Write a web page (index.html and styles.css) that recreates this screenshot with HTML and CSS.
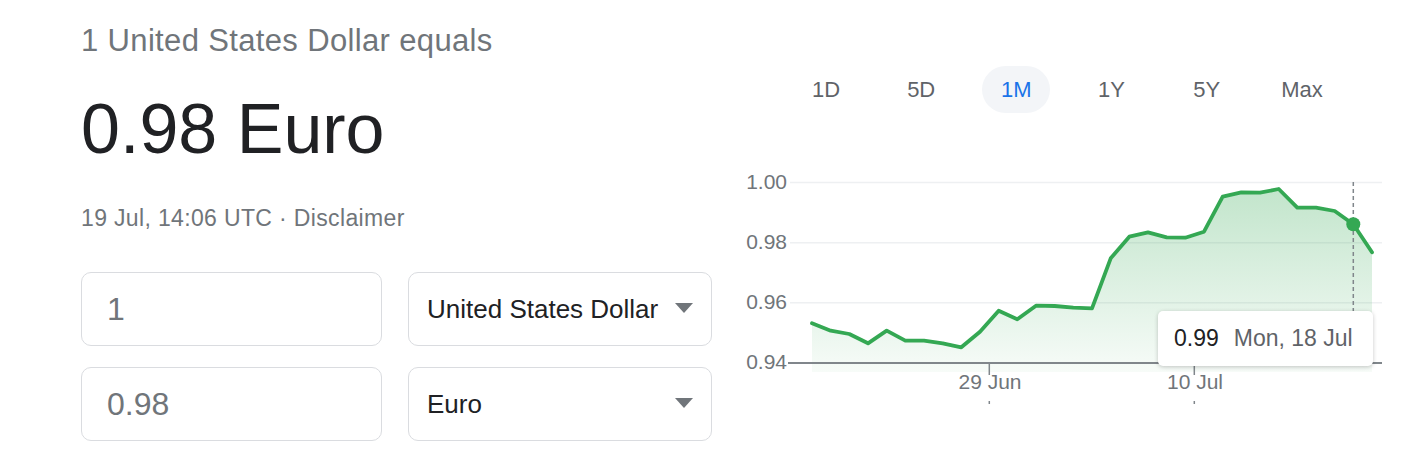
FILE: index.html
```html
<!DOCTYPE html>
<html lang="en">
<head>
<meta charset="utf-8">
<title>Currency converter</title>
<link rel="stylesheet" href="styles.css">
</head>
<body>
<div class="page">
  <section class="left">
    <div class="equals">1 United States Dollar equals</div>
    <div class="result">0.98 Euro</div>
    <div class="meta">19 Jul, 14:06 UTC · Disclaimer</div>
    <div class="converter">
      <div class="field amount">1</div>
      <div class="field select"><span>United States Dollar</span><span class="caret"></span></div>
      <div class="field amount">0.98</div>
      <div class="field select"><span>Euro</span><span class="caret"></span></div>
    </div>
  </section>
  <section class="right">
    <div class="periods">
      <div class="period">1D</div>
      <div class="period">5D</div>
      <div class="period active">1M</div>
      <div class="period">1Y</div>
      <div class="period">5Y</div>
      <div class="period">Max</div>
    </div>
    <svg class="chart" width="645" height="300" viewBox="0 0 645 300" xmlns="http://www.w3.org/2000/svg">
      <defs>
        <linearGradient id="fillg" x1="0" y1="0" x2="0" y2="1">
          <stop offset="0" stop-color="#34a853" stop-opacity="0.30"/>
          <stop offset="1" stop-color="#34a853" stop-opacity="0.04"/>
        </linearGradient>
      </defs>
      <g class="grid">
        <line x1="50" y1="69.5" x2="642" y2="69.5"/>
        <line x1="50" y1="129.7" x2="642" y2="129.7"/>
        <line x1="50" y1="189.8" x2="642" y2="189.8"/>
      </g>
      <g class="ylabels">
        <text x="47" y="76">1.00</text>
        <text x="47" y="136">0.98</text>
        <text x="47" y="196">0.96</text>
        <text x="47" y="256">0.94</text>
      </g>
      <path class="area" d="M72,210.3 L90.7,217.7 L109.3,221 L128,230.3 L146.7,217.7 L165.3,227.7 L184,227.7 L202.7,230.3 L221.3,234.3 L240,218.7 L258.7,197.7 L277.3,206.3 L296,192.7 L314.7,193 L333.3,194.7 L352,195.3 L370.7,145.3 L389.3,123.7 L408,119.3 L426.7,124.3 L445.3,124.7 L464,118.7 L482.7,83.7 L501.3,79.3 L520,79.7 L538.7,76 L557.3,94.7 L576,94.7 L594.7,98 L613.3,111.3 L632,139.3 L632,259 L72,259 Z" fill="url(#fillg)"/>
      <line class="axis" x1="48" y1="250" x2="642" y2="250"/>
      <g class="ticks">
        <line x1="249.3" y1="251" x2="249.3" y2="262"/>
        <line x1="454.3" y1="251" x2="454.3" y2="262"/>
        <line x1="249.3" y1="288" x2="249.3" y2="291"/>
        <line x1="454.3" y1="288" x2="454.3" y2="291"/>
      </g>
      <g class="xlabels">
        <text x="250" y="276">29 Jun</text>
        <text x="455" y="276">10 Jul</text>
      </g>
      <line class="hover" x1="613.3" y1="69" x2="613.3" y2="250"/>
      <path class="line" d="M72,210.3 L90.7,217.7 L109.3,221 L128,230.3 L146.7,217.7 L165.3,227.7 L184,227.7 L202.7,230.3 L221.3,234.3 L240,218.7 L258.7,197.7 L277.3,206.3 L296,192.7 L314.7,193 L333.3,194.7 L352,195.3 L370.7,145.3 L389.3,123.7 L408,119.3 L426.7,124.3 L445.3,124.7 L464,118.7 L482.7,83.7 L501.3,79.3 L520,79.7 L538.7,76 L557.3,94.7 L576,94.7 L594.7,98 L613.3,111.3 L632,139.3"/>
      <circle class="dot" cx="613.3" cy="111.3" r="7"/>
    </svg>
    <div class="tooltip"><span class="tip-value">0.99</span><span class="tip-date">Mon, 18 Jul</span></div>
  </section>
</div>
</body>
</html>
```
FILE: styles.css
```css
html, body {
  margin: 0;
  padding: 0;
  background: #ffffff;
}

body {
  font-family: "Liberation Sans", Arial, Helvetica, sans-serif;
  color: #202124;
}

.page {
  display: flex;
  width: 1401px;
  height: 461px;
  overflow: hidden;
}

.left {
  box-sizing: border-box;
  width: 712px;
  padding: 23px 0 0 81px;
  display: flex;
  flex-direction: column;
}

.equals {
  font-size: 31px;
  line-height: 36px;
  letter-spacing: 0.35px;
  color: #70757a;
  white-space: nowrap;
}

.result {
  margin-top: 30px;
  font-size: 70px;
  line-height: 80px;
  color: #202124;
  white-space: nowrap;
}

.meta {
  margin-top: 35px;
  font-size: 23px;
  line-height: 28px;
  letter-spacing: 0.35px;
  color: #70757a;
  white-space: nowrap;
}

.converter {
  margin-top: 40px;
  display: grid;
  grid-template-columns: 301px 304px;
  grid-auto-rows: 74px;
  column-gap: 26px;
  row-gap: 21px;
}

.field {
  box-sizing: border-box;
  border: 1px solid #dadce0;
  border-radius: 10px;
  display: flex;
  align-items: center;
  white-space: nowrap;
}

.amount {
  padding-left: 25px;
  font-size: 32px;
  color: #70757a;
}

.select {
  justify-content: space-between;
  padding: 0 18px 0 18px;
  font-size: 26px;
  color: #202124;
}

.caret {
  width: 0;
  height: 0;
  border-left: 9.5px solid transparent;
  border-right: 9.5px solid transparent;
  border-top: 10px solid #70757a;
  margin-top: -2px;
}

.right {
  position: relative;
  width: 645px;
  margin-left: 28px;
  padding-top: 66px;
  display: flex;
  flex-direction: column;
}

.periods {
  display: flex;
  gap: 27.2px;
  margin-left: 52px;
  height: 47px;
}

.period {
  width: 68px;
  height: 47px;
  border-radius: 24px;
  display: flex;
  align-items: center;
  justify-content: center;
  font-size: 22px;
  color: #5f6368;
}

.period.active {
  background: #f3f5f8;
  color: #1a73e8;
}

.chart {
  display: block;
}

.grid line {
  stroke: #eef0f2;
  stroke-width: 1.5;
}

.axis {
  stroke: #80868b;
  stroke-width: 2;
}

.ylabels text {
  font-family: "Liberation Sans", Arial, sans-serif;
  font-size: 21px;
  fill: #70757a;
  text-anchor: end;
}

.xlabels text {
  font-family: "Liberation Sans", Arial, sans-serif;
  font-size: 21px;
  fill: #70757a;
  text-anchor: middle;
}

.ticks line {
  stroke: #80868b;
  stroke-width: 1.5;
}

.hover {
  stroke: #80868b;
  stroke-width: 1.5;
  stroke-dasharray: 4 3;
}

.line {
  fill: none;
  stroke: #34a853;
  stroke-width: 3.8;
  stroke-linejoin: round;
  stroke-linecap: round;
}

.dot {
  fill: #34a853;
}

.tooltip {
  position: absolute;
  left: 418px;
  top: 311px;
  box-sizing: border-box;
  width: 215px;
  height: 55px;
  padding-left: 16px;
  background: #ffffff;
  border-radius: 5px;
  box-shadow: 0 1px 4px rgba(0, 0, 0, 0.22);
  display: flex;
  align-items: center;
  font-size: 23px;
  white-space: nowrap;
}

.tip-value {
  color: #202124;
  margin-right: 15px;
}

.tip-date {
  color: #5f6368;
}
```
